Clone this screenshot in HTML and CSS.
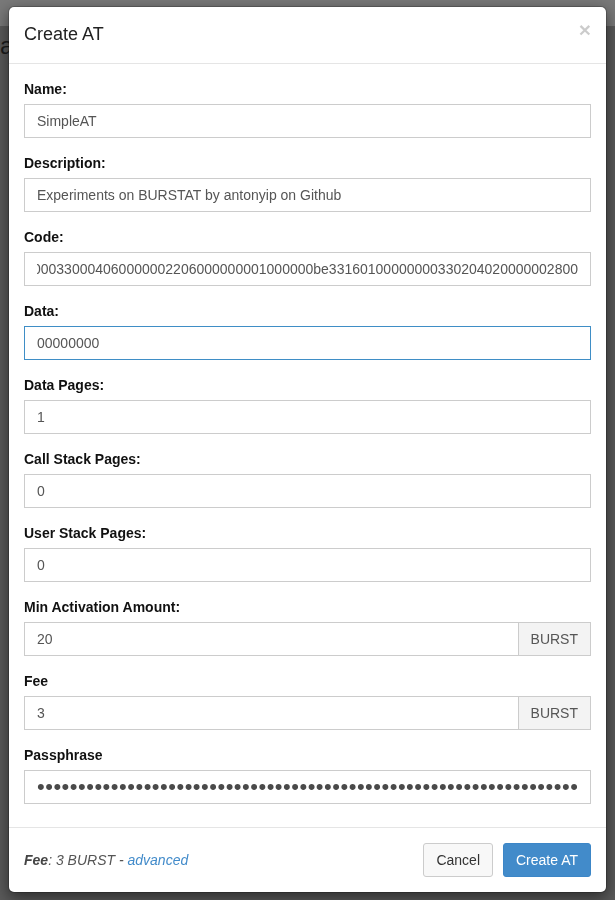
FILE: index.html
```html
<!DOCTYPE html>
<html lang="en">
<head>
<meta charset="utf-8">
<title>Create AT</title>
<link rel="stylesheet" href="styles.css">
</head>
<body>
<div class="page">
  <div class="topbar"></div>
  <h1 class="page-title">ac</h1>
</div>
<div class="modal">
  <div class="modal-dialog">
    <div class="modal-content">
      <div class="modal-header">
        <h4 class="modal-title">Create AT</h4>
        <button type="button" class="close">&times;</button>
      </div>
      <div class="modal-body">
        <div class="form-group">
          <label class="label">Name:</label>
          <input class="form-control" type="text" value="SimpleAT">
        </div>
        <div class="form-group">
          <label class="label">Description:</label>
          <input class="form-control" type="text" value="Experiments on BURSTAT by antonyip on Github">
        </div>
        <div class="form-group">
          <label class="label">Code:</label>
          <input class="form-control code" type="text" value="35000300000000350001010000001e0100000000000000330304030000000000330004060000002206000000001000000be33160100000000330204020000002800">
        </div>
        <div class="form-group">
          <label class="label">Data:</label>
          <input class="form-control focused" type="text" value="00000000">
        </div>
        <div class="form-group">
          <label class="label">Data Pages:</label>
          <input class="form-control" type="text" value="1">
        </div>
        <div class="form-group">
          <label class="label">Call Stack Pages:</label>
          <input class="form-control" type="text" value="0">
        </div>
        <div class="form-group">
          <label class="label">User Stack Pages:</label>
          <input class="form-control" type="text" value="0">
        </div>
        <div class="form-group">
          <label class="label">Min Activation Amount:</label>
          <div class="input-group">
            <input class="form-control" type="text" value="20">
            <span class="addon">BURST</span>
          </div>
        </div>
        <div class="form-group">
          <label class="label">Fee</label>
          <div class="input-group">
            <input class="form-control" type="text" value="3">
            <span class="addon">BURST</span>
          </div>
        </div>
        <div class="form-group last">
          <label class="label">Passphrase</label>
          <input class="form-control pass" type="password" value="abcdefghijabcdefghijabcdefghijabcdefghijabcdefghijabcdefghijabcdef">
        </div>
      </div>
      <div class="modal-footer">
        <div class="fee-info"><strong>Fee</strong>: 3 BURST - <a href="#" class="link">advanced</a></div>
        <div class="buttons">
          <button type="button" class="btn btn-default">Cancel</button>
          <button type="button" class="btn btn-primary">Create AT</button>
        </div>
      </div>
    </div>
  </div>
</div>
</body>
</html>
```

FILE: styles.css
```css
* {
  box-sizing: border-box;
}

html, body {
  margin: 0;
  height: 100%;
}

body {
  background: #5a5a5a;
  font-family: "Liberation Sans", Arial, Helvetica, sans-serif;
  font-size: 14px;
  line-height: 1.42857143;
  color: #333;
  overflow: hidden;
}

.topbar {
  height: 26px;
  background: #797979;
}

.page-title {
  margin: 6px 0 0 0;
  font-size: 24px;
  font-weight: normal;
  line-height: 28px;
  color: #1c1c1c;
}

.modal {
  position: fixed;
  inset: 0;
}

.modal-dialog {
  margin: 6px 8px 0 8px;
}

.modal-content {
  background: #fff;
  background-clip: padding-box;
  border: 1px solid rgba(0, 0, 0, 0.2);
  border-radius: 6px;
  box-shadow: 0 5px 15px rgba(0, 0, 0, 0.5);
}

.modal-header {
  display: flex;
  justify-content: space-between;
  align-items: flex-start;
  padding: 15px;
  border-bottom: 1px solid #e5e5e5;
}

.modal-title {
  margin: 0;
  font-size: 18px;
  font-weight: normal;
  line-height: 1.42857143;
  color: #222;
}

.close {
  margin-top: -3px;
  padding: 0;
  border: 0;
  background: transparent;
  font-family: "Liberation Sans", Arial, sans-serif;
  font-size: 21px;
  font-weight: bold;
  line-height: 1;
  color: #000;
  opacity: 0.2;
  cursor: pointer;
}

.modal-body {
  padding: 15px 15px 23px;
}

.form-group {
  margin-bottom: 15px;
}

.form-group.last {
  margin-bottom: 0;
}

.label {
  display: block;
  margin-bottom: 5px;
  font-weight: bold;
  color: #111;
}

.form-control {
  display: block;
  width: 100%;
  height: 34px;
  padding: 6px 12px;
  font-family: "Liberation Sans", Arial, sans-serif;
  font-size: 14px;
  line-height: 1.42857143;
  color: #555;
  background: #fff;
  border: 1px solid #ccc;
  border-radius: 0;
  outline: none;
}

.code {
  direction: rtl;
}

.focused {
  border-color: #3f8ec6;
}

.pass {
  padding-top: 3px;
  padding-bottom: 3px;
  font-size: 22px;
  letter-spacing: 0.5px;
  color: #4a4a4a;
}

.input-group {
  display: flex;
}

.input-group .form-control {
  flex: 1;
  min-width: 0;
}

.addon {
  display: flex;
  align-items: center;
  padding: 6px 12px;
  font-size: 14px;
  color: #555;
  background: #f3f3f3;
  border: 1px solid #ccc;
  border-left: 0;
}

.modal-footer {
  display: flex;
  justify-content: space-between;
  align-items: center;
  padding: 15px;
  border-top: 1px solid #e5e5e5;
}

.fee-info {
  font-style: italic;
  color: #555;
}

.fee-info strong {
  color: #444;
}

.link {
  color: #428bca;
  text-decoration: none;
}

.buttons {
  display: flex;
  gap: 10px;
}

.btn {
  height: 34px;
  padding: 6px 12px;
  font-family: "Liberation Sans", Arial, sans-serif;
  font-size: 14px;
  line-height: 1.42857143;
  border: 1px solid transparent;
  border-radius: 3px;
  cursor: pointer;
}

.btn-default {
  color: #333;
  background: #f8f8f8;
  border-color: #ccc;
}

.btn-primary {
  color: #fff;
  background: #428bca;
  border-color: #3c86c7;
}
```
